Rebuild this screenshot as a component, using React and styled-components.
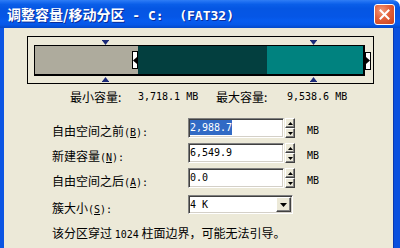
import React from 'react';
import styled, { createGlobalStyle } from 'styled-components';

const Global = createGlobalStyle`
  html, body { margin: 0; padding: 0; background: #ffffff; }
  body { width: 400px; height: 248px; overflow: hidden; }
  #root { width: 400px; height: 248px; }
`;

const cjk = `"Noto Sans CJK SC", "Noto Sans", sans-serif`;
const mono = `"DejaVu Sans Mono", "Noto Sans CJK SC", monospace`;

const Window = styled.div`
  width: 400px;
  height: 248px;
  display: flex;
  flex-direction: column;
  overflow: hidden;
  font-family: ${cjk};
  font-size: 12px;
  color: #000;
`;

const TitleBar = styled.div`
  height: 28px;
  flex: none;
  box-sizing: border-box;
  display: flex;
  align-items: center;
  justify-content: space-between;
  padding: 0 5px 0 7px;
  border-top-right-radius: 7px;
  background: linear-gradient(
    to bottom,
    #2f7df5 0%,
    #1a6cf0 8%,
    #0a5ee8 16%,
    #0556e3 30%,
    #0556e6 60%,
    #075cef 75%,
    #0658e8 88%,
    #0449c9 100%
  );
`;

const TitleText = styled.div`
  color: #fff;
  font-family: ${mono};
  font-weight: bold;
  font-size: 13px;
  line-height: 16px;
  white-space: pre;
  text-shadow: 1px 1px 0 #0a2c9a;
  margin-top: 2px;
`;

const TitleCjk = styled.span`
  font-family: ${cjk};
  font-size: 14px;
`;

const CloseButton = styled.div`
  width: 21px;
  height: 21px;
  box-sizing: border-box;
  border: 1px solid #fff;
  border-radius: 3px;
  background: radial-gradient(circle at 35% 30%, #f29a7a 0%, #e2603a 45%, #c9411b 100%);
  display: flex;
  align-items: center;
  justify-content: center;
`;

const Body = styled.div`
  flex: 1;
  background: #ece9d8;
  border-left: 4px solid #0b55e3;
  border-right: 6px solid #0a50de;
  box-shadow: inset -1px 0 0 #0838b0;
  padding: 8px 0 0 23px;
  display: flex;
  flex-direction: column;
`;

const PartitionBox = styled.div`
  position: relative;
  width: 347px;
  height: 48px;
  box-sizing: border-box;
  border: 1px solid #000;
  padding: 8px 1px 0 6px;
`;

const BarRow = styled.div`
  display: flex;
  align-items: center;
  height: 31px;
`;

const Bar = styled.div`
  display: flex;
  align-items: center;
  height: 31px;
  box-sizing: border-box;
  border: 1px solid #000;
  border-bottom-width: 2px;
  border-right-width: 2px;
  background: #aeab9d;
`;

const Segment = styled.div`
  align-self: stretch;
  width: ${p => p.$w}px;
  background: ${p => p.$color};
`;

const Handle = styled.div`
  flex: none;
  width: 6px;
  height: 18px;
  box-sizing: border-box;
  background: #fff;
  border: 1px solid #000;
  display: flex;
  align-items: center;
  justify-content: ${p => (p.$dir === 'left' ? 'flex-start' : 'flex-end')};
`;

const Marker = styled.svg`
  position: absolute;
  left: ${p => p.$x}px;
  top: ${p => p.$y}px;
`;

const InfoRow = styled.div`
  display: grid;
  grid-template-columns: 68px 78px 71px auto;
  margin: 6px 0 0 43px;
  line-height: 14px;
`;

const MonoText = styled.span`
  font-family: ${mono};
  font-size: 10px;
`;

const Form = styled.div`
  margin-top: 14px;
  margin-left: 25px;
  display: flex;
  flex-direction: column;
`;

const FieldRow = styled.div`
  display: grid;
  grid-template-columns: 136px 96px 11px auto;
  align-items: start;
  height: 20px;
  margin-top: ${p => p.$gap}px;
`;

const Label = styled.div`
  padding-top: 6px;
  line-height: 14px;
  white-space: nowrap;
`;

const Mnemonic = styled.span`
  font-family: ${mono};
  font-size: 10px;
  u { text-decoration: underline; }
`;

const TextBox = styled.div`
  height: 20px;
  box-sizing: border-box;
  background: #fff;
  border: 1px solid;
  border-color: #808080 #ffffff #ffffff #808080;
  box-shadow: inset 1px 1px 0 #404040, inset -1px -1px 0 #d4d0c8;
  padding-left: 1px;
  font-family: ${mono};
  font-size: 10px;
  line-height: 18px;
  white-space: pre;
`;

const Selected = styled.span`
  display: inline-block;
  background: #316ac5;
  color: #fff;
  line-height: 15px;
  vertical-align: top;
  margin-top: 1px;
`;

const Spin = styled.div`
  justify-self: end;
  width: 10px;
  height: 20px;
  display: flex;
  flex-direction: column;
`;

const SpinButton = styled.div`
  flex: 1;
  box-sizing: border-box;
  background: #ece9d8;
  border: 1px solid;
  border-color: #ffffff #404040 #404040 #ffffff;
  box-shadow: inset -1px -1px 0 #808080;
  display: flex;
  align-items: center;
  justify-content: center;
`;

const Unit = styled.div`
  padding-top: 6px;
  margin-left: 12px;
  line-height: 14px;
  font-family: ${mono};
  font-size: 10px;
`;

const Select = styled.div`
  grid-column: 2 / span 2;
  width: 105px;
  height: 19px;
  box-sizing: border-box;
  background: #fff;
  border: 1px solid;
  border-color: #808080 #ffffff #ffffff #808080;
  box-shadow: inset 1px 1px 0 #404040, inset -1px -1px 0 #d4d0c8;
  display: flex;
  align-items: stretch;
  padding: 1px 1px 1px 1px;
`;

const SelectValue = styled.div`
  flex: 1;
  font-family: ${mono};
  font-size: 10px;
  line-height: 15px;
  white-space: pre;
`;

const DropButton = styled.div`
  width: 15px;
  box-sizing: border-box;
  background: #ece9d8;
  border: 1px solid;
  border-color: #ffffff #404040 #404040 #ffffff;
  box-shadow: inset -1px -1px 0 #808080;
  display: flex;
  align-items: center;
  justify-content: center;
`;

const Note = styled.div`
  margin: 11px 0 0 25px;
  line-height: 14px;
  white-space: nowrap;
`;

const Arrow = ({ dir, w = 5, h = 3 }) => (
  <svg width={w} height={h} viewBox={`0 0 ${w} ${h}`}>
    {dir === 'up' ? (
      <polygon points={`${w / 2},0 ${w},${h} 0,${h}`} fill="#000" />
    ) : (
      <polygon points={`0,0 ${w},0 ${w / 2},${h}`} fill="#000" />
    )}
  </svg>
);

const SideArrow = ({ dir }) => (
  <svg width="4" height="7" viewBox="0 0 4 7">
    {dir === 'left' ? (
      <polygon points="0,3.5 4,0 4,7" fill="#000" />
    ) : (
      <polygon points="4,3.5 0,0 0,7" fill="#000" />
    )}
  </svg>
);

const TopMarker = ({ x }) => (
  <Marker $x={x} $y={3} width="7" height="5" viewBox="0 0 7 5">
    <rect x="0" y="0" width="7" height="1" fill="#1b2a78" />
    <polygon points="0.5,1 6.5,1 3.5,5" fill="#1b2a78" />
  </Marker>
);

const BottomMarker = ({ x }) => (
  <Marker $x={x} $y={40} width="7" height="5" viewBox="0 0 7 5">
    <polygon points="3.5,0 6.5,4 0.5,4" fill="#1b2a78" />
    <rect x="0" y="4" width="7" height="1" fill="#1b2a78" />
  </Marker>
);

const SpinBox = () => (
  <Spin>
    <SpinButton><Arrow dir="up" /></SpinButton>
    <SpinButton><Arrow dir="down" /></SpinButton>
  </Spin>
);

export default function App() {
  return (
    <>
      <Global />
      <Window>
        <TitleBar>
          <TitleText><TitleCjk>调整容量/移动分区</TitleCjk>{' - C:  (FAT32)'}</TitleText>
          <CloseButton>
            <svg width="11" height="11" viewBox="0 0 11 11">
              <line x1="1.5" y1="1.5" x2="9.5" y2="9.5" stroke="#fff" strokeWidth="2" strokeLinecap="square" />
              <line x1="9.5" y1="1.5" x2="1.5" y2="9.5" stroke="#fff" strokeWidth="2" strokeLinecap="square" />
            </svg>
          </CloseButton>
        </TitleBar>
        <Body>
          <PartitionBox>
            <TopMarker x={74} />
            <TopMarker x={282} />
            <BarRow>
              <Bar>
                <Segment $w={97} $color="#aeab9d" />
                <Handle $dir="left"><SideArrow dir="left" /></Handle>
                <Segment $w={129} $color="#033f3f" />
                <Segment $w={96} $color="#00827f" />
              </Bar>
              <Handle $dir="right"><SideArrow dir="right" /></Handle>
            </BarRow>
            <BottomMarker x={74} />
            <BottomMarker x={282} />
          </PartitionBox>
          <InfoRow>
            <span>最小容量:</span>
            <MonoText>3,718.1 MB</MonoText>
            <span>最大容量:</span>
            <MonoText>9,538.6 MB</MonoText>
          </InfoRow>
          <Form>
            <FieldRow $gap={0}>
              <Label>自由空间之前<Mnemonic>(<u>B</u>):</Mnemonic></Label>
              <TextBox><Selected>2,988.7</Selected></TextBox>
              <SpinBox />
              <Unit>MB</Unit>
            </FieldRow>
            <FieldRow $gap={5}>
              <Label>新建容量<Mnemonic>(<u>N</u>):</Mnemonic></Label>
              <TextBox>6,549.9</TextBox>
              <SpinBox />
              <Unit>MB</Unit>
            </FieldRow>
            <FieldRow $gap={5}>
              <Label>自由空间之后<Mnemonic>(<u>A</u>):</Mnemonic></Label>
              <TextBox>0.0</TextBox>
              <SpinBox />
              <Unit>MB</Unit>
            </FieldRow>
            <FieldRow $gap={7}>
              <Label>簇大小<Mnemonic>(<u>S</u>):</Mnemonic></Label>
              <Select>
                <SelectValue>4 K</SelectValue>
                <DropButton><Arrow dir="down" w={7} h={4} /></DropButton>
              </Select>
            </FieldRow>
          </Form>
          <Note>该分区穿过 <MonoText>1024</MonoText> 柱面边界，可能无法引导。</Note>
        </Body>
      </Window>
    </>
  );
}
